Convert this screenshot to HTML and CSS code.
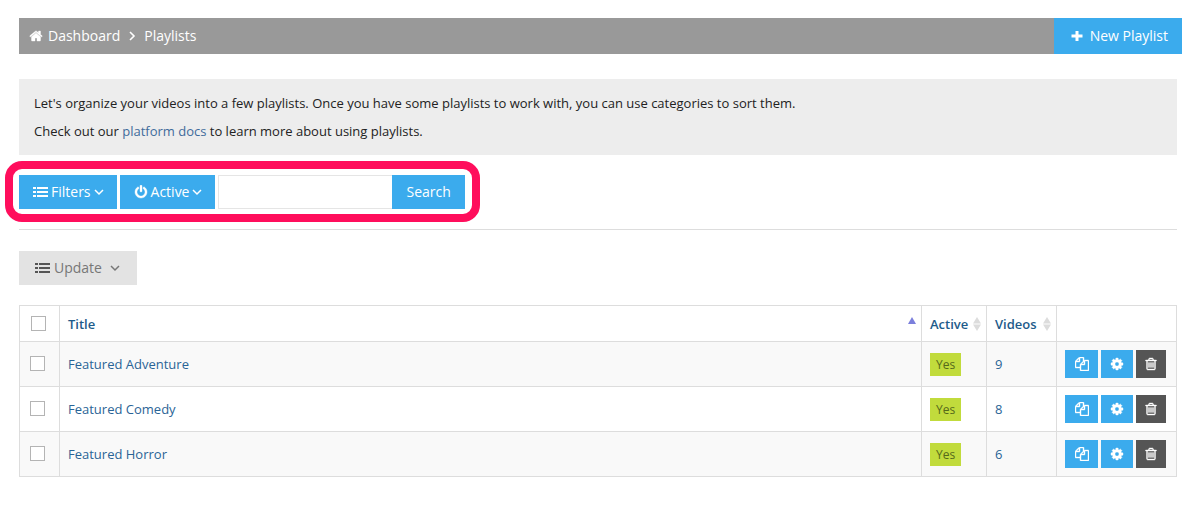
FILE: index.html
```
<!DOCTYPE html>
<html lang="en">
<head>
<meta charset="utf-8">
<title>Playlists</title>
<link rel="stylesheet" href="styles.css">
</head>
<body>
<svg class="sprite" aria-hidden="true">
  <symbol id="home" viewBox="0 0 1792 1792"><path d="M1472 992v480q0 26-19 45t-45 19h-384v-384h-256v384h-384q-26 0-45-19t-19-45v-480q0-1 .5-3t.5-3l575-474 575 474q1 2 1 6zm223-69l-62 74q-8 9-21 11h-3q-13 0-21-7l-692-577-692 577q-12 8-24 7-13-2-21-11l-62-74q-8-10-7-23.5t11-21.5l719-599q32-26 76-26t76 26l244 204v-195q0-14 9-23t23-9h192q14 0 23 9t9 23v408l219 182q10 8 11 21.5t-7 23.5z"/></symbol>
  <symbol id="cog" viewBox="0 0 1792 1792"><path d="M1152 896q0-106-75-181t-181-75-181 75-75 181 75 181 181 75 181-75 75-181zm512-109v222q0 12-8 23t-20 13l-185 28q-19 54-39 91 35 50 107 138 10 12 10 25t-9 23q-27 37-99 108t-94 71q-12 0-26-9l-138-108q-44 23-91 38-16 136-29 186-7 28-36 28h-222q-14 0-24.5-8.5t-11.5-21.5l-28-184q-49-16-90-37l-141 107q-10 9-25 9-14 0-25-11-126-114-165-168-7-10-7-23 0-12 8-23 15-21 51-66.5t54-70.5q-27-50-41-99l-183-27q-13-2-21-12.5t-8-23.5v-222q0-12 8-23t19-13l186-28q14-46 39-92-40-57-107-138-10-12-10-24 0-10 9-23 26-36 98.5-107.5t94.5-71.5q13 0 26 10l138 107q44-23 91-38 16-136 29-186 7-28 36-28h222q14 0 24.5 8.5t11.5 21.5l28 184q49 16 90 37l142-107q9-9 24-9 13 0 25 10 129 119 165 170 7 8 7 22 0 12-8 23-15 21-51 66.5t-54 70.5q26 50 41 98l183 28q13 2 21 12.5t8 23.5z"/></symbol>
  <symbol id="trash" viewBox="0 0 1792 1792"><path d="M704 736v576q0 14-9 23t-23 9h-64q-14 0-23-9t-9-23v-576q0-14 9-23t23-9h64q14 0 23 9t9 23zm256 0v576q0 14-9 23t-23 9h-64q-14 0-23-9t-9-23v-576q0-14 9-23t23-9h64q14 0 23 9t9 23zm256 0v576q0 14-9 23t-23 9h-64q-14 0-23-9t-9-23v-576q0-14 9-23t23-9h64q14 0 23 9t9 23zm128 724v-948h-896v948q0 22 7 40.5t14.5 27 10.5 8.5h832q3 0 10.5-8.5t14.5-27 7-40.5zm-672-1076h448l-48-117q-7-9-17-11h-317q-10 2-17 11zm928 32v64q0 14-9 23t-23 9h-96v948q0 83-47 143.5t-113 60.5h-832q-66 0-113-58.5t-47-141.5v-952h-96q-14 0-23-9t-9-23v-64q0-14 9-23t23-9h309l70-167q15-37 54-63t79-26h320q40 0 79 26t54 63l70 167h309q14 0 23 9t9 23z"/></symbol>
  <symbol id="copy" viewBox="0 0 1792 1792"><path d="M1696 384q40 0 68 28t28 68v1216q0 40-28 68t-68 28h-960q-40 0-68-28t-28-68v-288h-544q-40 0-68-28t-28-68v-672q0-40 20-88t48-76l408-408q28-28 76-48t88-20h416q40 0 68 28t28 68v328q68-40 128-40h416zm-544 213l-299 299h299v-299zm-640-384l-299 299h299v-299zm196 647l316-316v-416h-384v416q0 40-28 68t-68 28h-416v640h512v-256q0-40 20-88t48-76zm956 804v-1152h-384v416q0 40-28 68t-68 28h-416v640h896z"/></symbol>
  <symbol id="power" viewBox="0 0 1792 1792"><path d="M1664 896q0 156-61 298t-164 245-245 164-298 61-298-61-245-164-164-245-61-298q0-182 80.500-343t226.500-270q43-32 95.500-25t83.500 50q32 42 24.500 94.500t-49.500 84.500q-98 74-151.500 181t-53.500 228q0 104 40.500 198.500t109.500 163.500 163.500 109.500 198.500 40.500 198.500-40.500 163.500-109.500 109.500-163.500 40.500-198.500q0-121-53.500-228t-151.500-181q-42-32-49.500-84.500t24.500-94.500q31-43 84-50t95 25q146 109 226.500 270t80.500 343zm-640-768v640q0 52-38 90t-90 38-90-38-38-90v-640q0-52 38-90t90-38 90 38 38 90z"/></symbol>
  <symbol id="list" viewBox="0 0 15 12"><path d="M0 1h3v2H0zM0 5h3v2H0zM0 9h3v2H0zM4 1h11v2H4zM4 5h11v2H4zM4 9h11v2H4z"/></symbol>
  <symbol id="plus" viewBox="0 0 12 12"><path d="M4.500 1h3v3.500H11.500v3H7.500V11h-3V7.500H.5v-3H4.500z"/></symbol>
  <symbol id="down" viewBox="0 0 10 10"><path d="M1 3l4 4 4-4" fill="none" stroke="currentColor" stroke-width="1.500"/></symbol>
  <symbol id="right" viewBox="0 0 10 10"><path d="M3 1l4 4-4 4" fill="none" stroke="currentColor" stroke-width="1.600"/></symbol>
  <symbol id="sort" viewBox="0 0 8 14"><path d="M4 0l4 6.500H0zM0 7.500h8l-4 6.500z"/></symbol>
  <symbol id="asc" viewBox="0 0 8 14"><path d="M4 0l4 7H0z"/></symbol>
</svg>

<header class="topbar">
  <nav class="crumbs" aria-label="Breadcrumb">
    <a class="crumb" href="#"><svg class="icon bold"><use href="#home"/></svg>Dashboard</a>
    <svg class="icon-xs"><use href="#right"/></svg>
    <span>Playlists</span>
  </nav>
  <a class="new" href="#"><svg class="icon-sm"><use href="#plus"/></svg>New Playlist</a>
</header>

<main class="content">
  <section class="note">
    <p>Let's organize your videos into a few playlists. Once you have some playlists to work with, you can use categories to sort them.</p>
    <p>Check out our <a href="#">platform docs</a> to learn more about using playlists.</p>
  </section>

  <div class="filterbar">
    <form class="highlight">
      <button type="button" class="btn menu"><svg class="icon-list"><use href="#list"/></svg>Filters<svg class="icon-xs"><use href="#down"/></svg></button>
      <button type="button" class="btn menu"><svg class="icon bold"><use href="#power"/></svg>Active<svg class="icon-xs"><use href="#down"/></svg></button>
      <div class="search">
        <input type="text" aria-label="Search playlists">
        <button type="button" class="btn">Search</button>
      </div>
    </form>
  </div>

  <button type="button" class="btn update"><svg class="icon-list"><use href="#list"/></svg><span>Update</span><svg class="icon-xs"><use href="#down"/></svg></button>

  <table class="list">
    <thead>
      <tr>
        <th class="check"><input type="checkbox" aria-label="Select all"></th>
        <th><div class="head">Title<svg class="sort asc"><use href="#asc"/></svg></div></th>
        <th class="active"><div class="head">Active<svg class="sort"><use href="#sort"/></svg></div></th>
        <th class="videos"><div class="head">Videos<svg class="sort"><use href="#sort"/></svg></div></th>
        <th class="tools"></th>
      </tr>
    </thead>
    <tbody>
      <tr>
        <td class="check"><input type="checkbox" aria-label="Select Featured Adventure"></td>
        <td><a href="#">Featured Adventure</a></td>
        <td><span class="yes">Yes</span></td>
        <td><a href="#">9</a></td>
        <td><div class="actions"><button class="copy" aria-label="Copy"><svg class="icon bold"><use href="#copy"/></svg></button><button class="cog" aria-label="Settings"><svg class="icon bold"><use href="#cog"/></svg></button><button class="delete" aria-label="Delete"><svg class="icon bold"><use href="#trash"/></svg></button></div></td>
      </tr>
      <tr>
        <td class="check"><input type="checkbox" aria-label="Select Featured Comedy"></td>
        <td><a href="#">Featured Comedy</a></td>
        <td><span class="yes">Yes</span></td>
        <td><a href="#">8</a></td>
        <td><div class="actions"><button class="copy" aria-label="Copy"><svg class="icon bold"><use href="#copy"/></svg></button><button class="cog" aria-label="Settings"><svg class="icon bold"><use href="#cog"/></svg></button><button class="delete" aria-label="Delete"><svg class="icon bold"><use href="#trash"/></svg></button></div></td>
      </tr>
      <tr>
        <td class="check"><input type="checkbox" aria-label="Select Featured Horror"></td>
        <td><a href="#">Featured Horror</a></td>
        <td><span class="yes">Yes</span></td>
        <td><a href="#">6</a></td>
        <td><div class="actions"><button class="copy" aria-label="Copy"><svg class="icon bold"><use href="#copy"/></svg></button><button class="cog" aria-label="Settings"><svg class="icon bold"><use href="#cog"/></svg></button><button class="delete" aria-label="Delete"><svg class="icon bold"><use href="#trash"/></svg></button></div></td>
      </tr>
    </tbody>
  </table>
</main>
</body>
</html>
```
FILE: styles.css
```
* { box-sizing: border-box; }
body {
  margin: 0;
  padding: 18px 14px 18px 19px;
  background: #fff;
  color: #222;
  font: 13px/20px "Open Sans", sans-serif;
}
a { color: #2a6496; text-decoration: none; }
button, input { font: inherit; margin: 0; }
svg { fill: currentColor; flex: none; display: block; }
.sprite { position: absolute; width: 0; height: 0; }
.icon { width: 14px; height: 14px; }
.bold { stroke: currentColor; stroke-width: 50; overflow: visible; }
.icon-sm { width: 12px; height: 12px; }
.icon-xs { width: 10px; height: 10px; }
.icon-list { width: 15px; height: 12px; }

.topbar {
  display: flex;
  justify-content: space-between;
  height: 36px;
  background: #999;
  color: #fff;
  font-size: 14px;
}
.topbar a { color: #fff; }
.crumbs { display: flex; align-items: center; gap: 7px; padding-left: 10px; }
.crumb { display: flex; align-items: center; gap: 5px; }
.new {
  display: flex;
  align-items: center;
  gap: 7px;
  padding: 0 14px 0 17px;
  background: #3babed;
}

.content { padding-right: 5px; }
.note {
  display: flex;
  flex-direction: column;
  gap: 8px;
  margin-top: 25px;
  padding: 14px 15px;
  background: #ededed;
}
.note p { margin: 0; }
.note a { color: #3f6b9b; }

.filterbar {
  display: flex;
  padding: 6px 0 7px;
  border-bottom: 1px solid #ddd;
}
.highlight {
  display: flex;
  gap: 3px;
  margin-left: -14px;
  padding: 6px 7px 5px 6px;
  border: 8px solid #ff0e5c;
  border-radius: 17px;
}
.btn {
  display: flex;
  align-items: center;
  justify-content: center;
  gap: 3px;
  height: 34px;
  padding: 0 14px;
  border: 0;
  background: #3babed;
  color: #fff;
  font-size: 14px;
}
.menu { padding-right: 13px; }
.search { display: flex; }
.search input {
  width: 174px;
  height: 34px;
  padding: 0 8px;
  border: 1px solid #e5e5e5;
  border-right: 0;
}
.update {
  gap: 4px;
  margin: 21px 0 20px;
  padding: 0 17px 0 16px;
  background: #e3e3e3;
  color: #777;
}
.update span { padding-right: 4px; }
.update .icon-list { color: #555; }

.list { width: 100%; border-collapse: collapse; table-layout: fixed; }
.list th, .list td {
  height: 45px;
  padding: 0 8px;
  border: 1px solid #ddd;
  text-align: left;
  vertical-align: middle;
}
.list th { height: 36px; color: #1d5b8a; font-weight: 600; }
.list tbody tr:nth-child(odd) { background: #f9f9f9; }
.list .check { width: 40px; padding: 0 10px 2px; }
.list th.check { padding: 0 11px; }
.active { width: 65px; }
.videos { width: 70px; }
.tools { width: 120px; }
.list input {
  display: block;
  width: 15px;
  height: 15px;
  appearance: none;
  border: 1px solid #b4b4b4;
  background: #fff;
}
.head {
  display: flex;
  align-items: center;
  justify-content: space-between;
  margin-right: -3px;
}
.sort { width: 8px; height: 14px; color: #dcdcdc; }
.asc { color: #7b7fdc; }
.yes {
  display: inline-block;
  padding: 2px 6px 1px;
  background: #c1db3c;
  color: #55691b;
  font-size: 12px;
}
.actions { display: flex; gap: 3px; }
.actions button {
  display: flex;
  align-items: center;
  justify-content: center;
  height: 28px;
  padding: 0;
  border: 0;
  background: #3babed;
  color: #fff;
}
.actions .copy { width: 33px; }
.actions .cog { width: 32px; }
.actions .delete { width: 30px; background: #555; }
```
